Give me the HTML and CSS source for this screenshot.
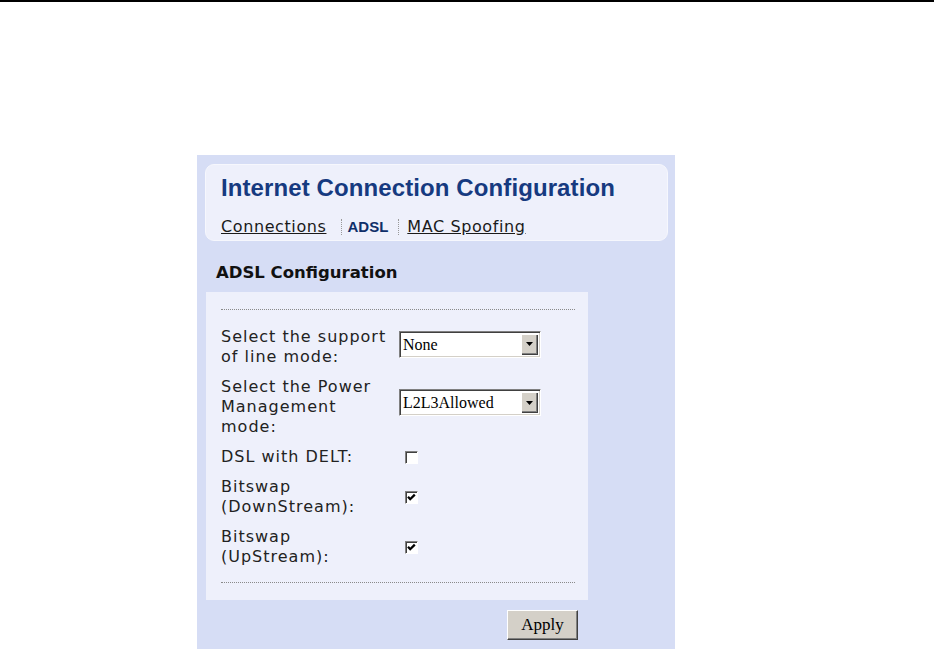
FILE: index.html
```html
<!DOCTYPE html>
<html lang="en">
<head>
    <meta charset="UTF-8">
    <title>Internet Connection Configuration</title>
    <link rel="stylesheet" href="styles.css">
</head>
<body>
    <div class="rule"></div>
    <div class="panel">
        <div class="head">
            <h1>Internet Connection Configuration</h1>
            <div class="tabs">
                <a href="#" class="tab">Connections</a>
                <span class="sep"></span>
                <span class="tab-on">ADSL</span>
                <span class="sep"></span>
                <a href="#" class="tab">MAC Spoofing</a>
            </div>
        </div>

        <h2>ADSL Configuration</h2>

        <div class="box">
            <div class="dots"></div>
            <table class="form">
                <tr>
                    <td class="lbl">Select the support of line mode:</td>
                    <td>
                        <span class="select">
                            <select><option>None</option></select>
                            <span class="arrow"><svg width="7" height="4" viewBox="0 0 7 4"><path d="M0 0h7L3.5 4z" fill="#000"/></svg></span>
                        </span>
                    </td>
                </tr>
                <tr>
                    <td class="lbl">Select the Power Management mode:</td>
                    <td>
                        <span class="select sel-low">
                            <select><option>L2L3Allowed</option></select>
                            <span class="arrow"><svg width="7" height="4" viewBox="0 0 7 4"><path d="M0 0h7L3.5 4z" fill="#000"/></svg></span>
                        </span>
                    </td>
                </tr>
                <tr>
                    <td class="lbl">DSL with DELT:</td>
                    <td><span class="check"></span></td>
                </tr>
                <tr>
                    <td class="lbl">Bitswap (DownStream):</td>
                    <td><span class="check"><svg width="11" height="11" viewBox="0 0 11 11"><path d="M2 4.8l2.2 2.4L8.8 2.6" fill="none" stroke="#000" stroke-width="2.3"/></svg></span></td>
                </tr>
                <tr>
                    <td class="lbl">Bitswap (UpStream):</td>
                    <td><span class="check"><svg width="11" height="11" viewBox="0 0 11 11"><path d="M2 4.8l2.2 2.4L8.8 2.6" fill="none" stroke="#000" stroke-width="2.3"/></svg></span></td>
                </tr>
            </table>
            <div class="dots"></div>
        </div>

        <div class="actions">
            <button class="btn">Apply</button>
        </div>
    </div>
</body>
</html>
```

FILE: styles.css
```css
body { margin: 0; font-family: "DejaVu Sans", Verdana, sans-serif; color: #1a1a1a; background: #fff; overflow: hidden; }
.rule { width: 934px; height: 2px; background: #000; }

.panel { width: 478px; height: 494px; margin: 153px 0 0 197px; padding: 9px 7px 0 8px; box-sizing: border-box; background: #d6ddf5; }

.head { height: 77px; box-sizing: border-box; padding: 9px 0 0 15px; background: #eef0fb; border: 1px solid #f6f7fd; border-radius: 9px; }
.head h1 { margin: 0; font: bold 24px/28px "Liberation Sans", Arial, sans-serif; color: #163a80; letter-spacing: 0.1px; }

.tabs { display: flex; align-items: center; margin-top: 15px; font-size: 16px; line-height: 20px; letter-spacing: 0.6px; }
.tab { color: #1a1a1a; text-decoration: underline; }
.tab-on { font: bold 15px/20px "Liberation Sans", Arial, sans-serif; color: #0f2f6a; letter-spacing: 0; }
.sep { width: 0; height: 16px; border-left: 1px dotted #999; }
.tabs .sep:nth-child(2) { margin: 0 5px 0 15px; }
.tabs .sep:nth-child(4) { margin: 0 8px 0 10px; }

h2 { margin: 22px 0 9px 11px; font-size: 16.5px; line-height: 20px; font-weight: bold; color: #111; }

.box { width: 382px; height: 308px; margin-left: 1px; padding: 17px 13px 17px 15px; box-sizing: border-box; background: #eef0fb; }
.dots { border-top: 1px dotted #8a8a8a; }

.form { border-collapse: collapse; margin: 12px 0 10px; }
.form td { padding: 5px 0; vertical-align: middle; font-size: 16px; line-height: 20px; letter-spacing: 1px; color: #222; }
.form td.lbl { width: 170px; padding-right: 8px; }

.select { display: inline-flex; width: 142px; height: 27px; margin-bottom: 6px; box-sizing: border-box; border-top: 1px solid #808080; border-left: 1px solid #808080; border-right: 1px solid #fff; border-bottom: 1px solid #fff; box-shadow: inset 1px 1px #404040, inset -1px -1px #d4d0c8; background: #fff; padding: 2px; vertical-align: middle; }
.sel-low { margin-bottom: 9px; }
.select select { flex: 1; appearance: none; -webkit-appearance: none; border: 0; background: transparent; padding: 0 0 0 1px; font: 16px "Liberation Serif", "Times New Roman", serif; color: #000; letter-spacing: 0; outline: none; }
.arrow { display: flex; align-items: center; justify-content: center; width: 17px; background: #d4d0c8; box-shadow: inset 1px 1px #fff, inset -1px -1px #404040, inset -2px -2px #808080; }

.check { display: inline-flex; align-items: center; justify-content: center; width: 13px; height: 13px; margin-left: 6px; box-sizing: border-box; border-top: 1px solid #808080; border-left: 1px solid #808080; border-right: 1px solid #fff; border-bottom: 1px solid #fff; box-shadow: inset 1px 1px #404040; background: #fff; vertical-align: middle; }

.actions { margin-top: 10px; padding-right: 90px; text-align: right; }
.btn { width: 71px; height: 30px; padding: 0; font: 17px "Liberation Serif", "Times New Roman", serif; color: #000; background: #d4d0c8; border-top: 1px solid #fff; border-left: 1px solid #fff; border-right: 1px solid #404040; border-bottom: 1px solid #404040; box-shadow: inset -1px -1px #808080; }
```
